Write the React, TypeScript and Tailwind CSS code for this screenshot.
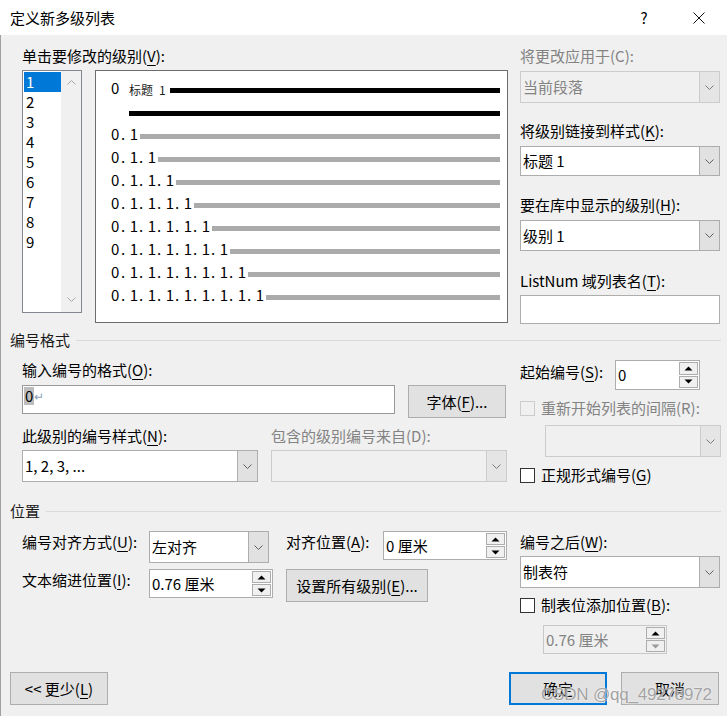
import React from "react";

function Chevron({ color = "#5f5f5f", up = false }: { color?: string; up?: boolean }) {
  return (
    <svg width="9" height="5" viewBox="0 0 9 5">
      <polyline
        points={up ? "0.5,4.5 4.5,0.5 8.5,4.5" : "0.5,0.5 4.5,4.5 8.5,0.5"}
        fill="none"
        stroke={color}
        strokeWidth="1"
      />
    </svg>
  );
}

function Tri({ up = false, color = "#000000" }: { up?: boolean; color?: string }) {
  return (
    <svg width="9" height="5" viewBox="0 0 9 5">
      <polygon points={up ? "0.5,4.5 4.5,0.5 8.5,4.5" : "0.5,0.5 8.5,0.5 4.5,4.5"} fill={color} />
    </svg>
  );
}

function Combo({ className, text, disabled }: { className: string; text?: string; disabled?: boolean }) {
  return (
    <div
      className={`flex border ${disabled ? "border-[#cccccc] bg-[#f0f0f0]" : "border-[#adadad] bg-white"} ${className}`}
    >
      <div className={`flex-1 flex items-center pl-[2px] ${disabled ? "text-[#838383]" : "text-black"}`}>{text}</div>
      <div
        className={`w-[20px] flex items-center justify-center border-l ${
          disabled ? "border-[#cccccc] bg-[#e5e5e5]" : "border-[#adadad] bg-[#e1e1e1]"
        }`}
      >
        <Chevron color={disabled ? "#7a7a7a" : "#5f5f5f"} />
      </div>
    </div>
  );
}

function Spin({ className, text, disabled }: { className: string; text: string; disabled?: boolean }) {
  return (
    <div
      className={`flex border ${disabled ? "border-[#c8c8c8] bg-[#f0f0f0]" : "border-[#adadad] bg-white"} ${className}`}
    >
      <div className={`flex-1 flex items-center pl-[2px] ${disabled ? "text-[#838383]" : "text-black"}`}>{text}</div>
      <div className="flex flex-col w-[20px] py-[1px] pr-[1px] gap-[1px]">
        <div className="flex-1 border border-[#adadad] bg-[#f0f0f0] flex items-center justify-center">
          <Tri up />
        </div>
        <div className="flex-1 border border-[#adadad] bg-[#f0f0f0] flex items-center justify-center">
          <Tri color={disabled ? "#9a9a9a" : "#000000"} />
        </div>
      </div>
    </div>
  );
}

function Check({ disabled }: { disabled?: boolean }) {
  return (
    <div
      className={`w-[15px] h-[15px] shrink-0 border ${
        disabled ? "border-[#cccccc] bg-[#f0f0f0]" : "border-[#333333] bg-white"
      }`}
    />
  );
}

function Btn({ className, children, primary }: { className: string; children: React.ReactNode; primary?: boolean }) {
  return (
    <div
      className={`flex items-center justify-center bg-[#e1e1e1] ${
        primary ? "border-2 border-[#0078d7]" : "border border-[#adadad]"
      } ${className}`}
    >
      {children}
    </div>
  );
}

function U({ children }: { children: React.ReactNode }) {
  return <u className="underline decoration-1 underline-offset-[3px]">{children}</u>;
}

const rows = [
  { chunks: 1, w: "w-[18px]" },
  { chunks: 2, w: "w-[36px]" },
  { chunks: 3, w: "w-[54px]" },
  { chunks: 4, w: "w-[72px]" },
  { chunks: 5, w: "w-[90px]" },
  { chunks: 6, w: "w-[108px]" },
  { chunks: 7, w: "w-[126px]" },
  { chunks: 8, w: "w-[144px]" },
];

function SectionHeader({ title }: { title: string }) {
  return (
    <div className="flex items-center h-[20px] pl-[9px] pr-[6px]">
      <span className="text-[#1a1a1a]">{title}</span>
      <div className="flex-1 ml-[6px] h-px bg-[#dadada]" />
    </div>
  );
}

export default function App() {
  return (
    <div className="w-[727px] h-[716px] overflow-hidden relative flex flex-col bg-[#f0f0f0] font-['Noto_Sans_CJK_SC',sans-serif] text-black text-[15px] leading-[20px]">
      {/* Title bar */}
      <div className="h-[35px] bg-white flex items-center shrink-0">
        <div className="pl-[10px] flex-1">定义新多级列表</div>
        <div className="w-[14px] text-center">?</div>
        <svg className="ml-[42px] mr-[22px]" width="12" height="12" viewBox="0 0 12 12">
          <line x1="0.5" y1="0.5" x2="11.5" y2="11.5" stroke="#111" strokeWidth="1" />
          <line x1="11.5" y1="0.5" x2="0.5" y2="11.5" stroke="#111" strokeWidth="1" />
        </svg>
      </div>

      {/* Body */}
      <div className="flex-1 flex flex-col border-l border-[#a0a0a0]">
        {/* Top section */}
        <div className="flex pt-[11px] pl-[21px] h-[295px]">
          <div className="w-[486px] flex flex-col">
            <div>
              单击要修改的级别(<U>V</U>):
            </div>
            <div className="flex mt-[4px]">
              {/* level list */}
              <div className="w-[60px] h-[243px] border border-[#828790] bg-white flex">
                <div className="flex-1 pt-[1px] pl-[1px]">
                  {[1, 2, 3, 4, 5, 6, 7, 8, 9].map((n) => (
                    <div
                      key={n}
                      className={`h-[20px] leading-[20px] pl-[2px] ${n === 1 ? "bg-[#0078d7] text-white" : ""}`}
                    >
                      {n}
                    </div>
                  ))}
                </div>
                <div className="w-[20px] bg-[#f0f0f0] flex flex-col items-center justify-between pt-[9px] pb-[10px]">
                  <Chevron up color="#a6a6a6" />
                  <Chevron color="#a6a6a6" />
                </div>
              </div>
              {/* preview */}
              <div className="ml-[13px] w-[413px] h-[253px] border border-[#6d6d6d] bg-white flex flex-col pt-[6px] pl-[15px] pr-[7px]">
                <div className="flex items-center h-[22px]">
                  <span className="w-[18px]">0</span>
                  <span className="mt-[4px] text-[12px] leading-[14px] text-[#222]">标题</span>
                  <span className="mt-[4px] ml-[6px] text-[12px] leading-[14px] text-[#222]">1</span>
                  <div className="flex-1 ml-[4px] mt-[4px] h-[5px] bg-black" />
                </div>
                <div className="ml-[18px] mt-[12px] h-[5px] bg-black" />
                <div className="mt-[6px] flex flex-col">
                  {rows.map((r) => (
                    <div key={r.chunks} className="flex items-center h-[23px]">
                      <span className="w-[9px]">0</span>
                      <span className={`${r.w} flex`}>
                        {Array.from({ length: r.chunks }).map((_, i) => (
                          <span key={i} className="w-[18px] shrink-0 flex justify-between pl-[1px]">
                            <span>.</span>
                            <span>1</span>
                          </span>
                        ))}
                      </span>
                      <div className="flex-1 ml-[2px] mt-[6px] h-[5px] bg-[#ababab]" />
                    </div>
                  ))}
                </div>
              </div>
            </div>
          </div>

          {/* right column */}
          <div className="ml-[12px] w-[200px] flex flex-col">
            <div className="text-[#838383]">将更改应用于(C):</div>
            <Combo className="mt-[5px] h-[32px]" text="当前段落" disabled />
            <div className="mt-[18px]">
              将级别链接到样式(<U>K</U>):
            </div>
            <Combo className="mt-[5px] h-[30px]" text="标题 1" />
            <div className="mt-[19px]">
              要在库中显示的级别(<U>H</U>):
            </div>
            <Combo className="mt-[5px] h-[31px]" text="级别 1" />
            <div className="mt-[20px]">
              ListNum 域列表名(<U>T</U>):
            </div>
            <div className="mt-[4px] h-[29px] border border-[#adadad] bg-white" />
          </div>
        </div>

        {/* 编号格式 */}
        <SectionHeader title="编号格式" />
        <div className="flex pl-[21px] h-[151px]">
          <div className="w-[486px] flex flex-col">
            <div className="mt-[10px]">
              输入编号的格式(<U>O</U>):
            </div>
            <div className="flex mt-[5px] items-start">
              <div className="w-[373px] h-[29px] border border-[#999999] bg-white flex items-start pt-[1px] pl-[1px]">
                <span className="bg-[#bdbdbd] h-[18px] leading-[18px] px-[1px]">0</span>
                <span className="h-[18px] leading-[18px] text-[12px] text-[#8aa0b8]">↵</span>
              </div>
              <Btn className="ml-[13px] w-[98px] h-[33px]">
                字体(<U>F</U>)...
              </Btn>
            </div>
            <div className="flex mt-[8px]">
              <div className="w-[249px]">
                此级别的编号样式(<U>N</U>):
              </div>
              <div className="text-[#838383]">包含的级别编号来自(D):</div>
            </div>
            <div className="flex mt-[4px]">
              <Combo className="w-[236px] h-[32px]" text="1, 2, 3, ..." />
              <Combo className="ml-[13px] w-[236px] h-[32px]" disabled />
            </div>
          </div>
          <div className="ml-[12px] w-[201px] flex flex-col">
            <div className="flex items-center mt-[10px] h-[30px]">
              <div className="w-[95px] -mt-[6px]">
                起始编号(<U>S</U>):
              </div>
              <Spin className="w-[85px] h-[30px]" text="0" />
            </div>
            <div className="flex items-center mt-[8px] h-[20px]">
              <Check disabled />
              <span className="ml-[6px] text-[#838383]">重新开始列表的间隔(R):</span>
            </div>
            <Combo className="mt-[7px] ml-[25px] w-[176px] h-[32px]" disabled />
            <div className="flex items-center mt-[8px] h-[20px]">
              <Check />
              <span className="ml-[6px]">
                正规形式编号(<U>G</U>)
              </span>
            </div>
          </div>
        </div>

        {/* 位置 */}
        <SectionHeader title="位置" />
        <div className="flex pl-[21px] h-[151px]">
          <div className="w-[486px] flex flex-col">
            <div className="flex mt-[10px] items-start">
              <div className="w-[127px] mt-[1px]">
                编号对齐方式(<U>U</U>):
              </div>
              <Combo className="w-[120px] h-[32px]" text="左对齐" />
              <div className="ml-[17px] w-[97px] mt-[1px]">
                对齐位置(<U>A</U>):
              </div>
              <Spin className="w-[124px] h-[29px]" text="0 厘米" />
            </div>
            <div className="flex mt-[6px] items-start">
              <div className="w-[127px] mt-[1px]">
                文本缩进位置(<U>I</U>):
              </div>
              <Spin className="w-[124px] h-[29px]" text="0.76 厘米" />
              <Btn className="ml-[13px] w-[142px] h-[33px]">
                设置所有级别(<U>E</U>)...
              </Btn>
            </div>
          </div>
          <div className="ml-[12px] w-[201px] flex flex-col">
            <div className="mt-[11px]">
              编号之后(<U>W</U>):
            </div>
            <Combo className="mt-[4px] w-[200px] h-[32px]" text="制表符" />
            <div className="flex items-center mt-[7px] h-[20px]">
              <Check />
              <span className="ml-[6px]">
                制表位添加位置(<U>B</U>):
              </span>
            </div>
            <Spin className="mt-[10px] ml-[23px] w-[124px] h-[29px]" text="0.76 厘米" disabled />
          </div>
        </div>

        {/* bottom buttons */}
        <div className="flex h-[33px] pl-[9px] pr-[8px]">
          <Btn className="w-[98px] h-[33px]">
            {"<< 更少("}
            <U>L</U>)
          </Btn>
          <Btn className="ml-auto w-[98px] h-[33px]" primary>
            确定
          </Btn>
          <Btn className="ml-[14px] w-[98px] h-[33px]">取消</Btn>
        </div>
      </div>

      {/* watermark */}
      <div className="absolute left-[541px] top-[685px] font-['Liberation_Sans',sans-serif] text-[17px] leading-[20px] tracking-[-0.2px] text-[#a3a3a3] [text-shadow:0_0_2px_#ffffff] whitespace-nowrap">
        CSDN @qq_49278972
      </div>
    </div>
  );
}
